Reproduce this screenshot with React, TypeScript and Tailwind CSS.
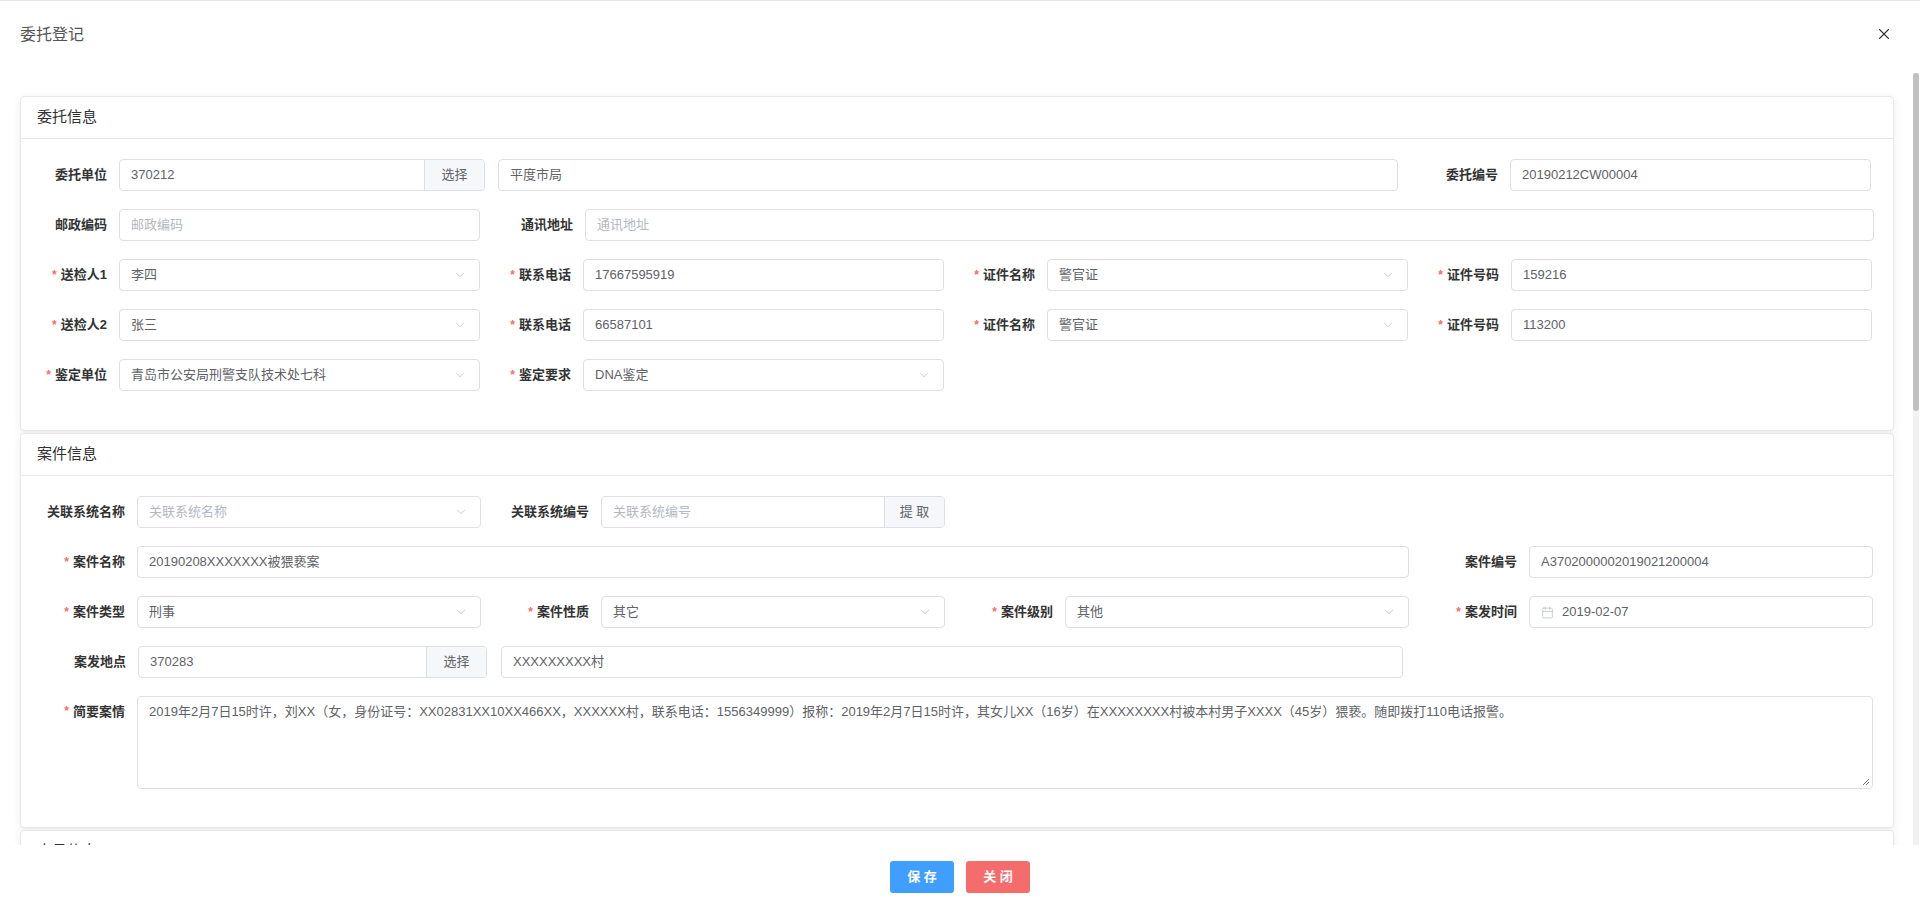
import React from "react";
import { X, ChevronDown, Calendar } from "lucide-react";

const F = { fontFamily: '"Liberation Sans", "Noto Sans CJK SC", sans-serif' };

function Label({ text, req, w }: { text: string; req?: boolean; w: string }) {
  return (
    <div className={`${w} shrink-0 flex items-center justify-end pr-3 text-[13px] font-bold text-[#333]`}>
      {req && <span className="text-[#f56c6c] mr-1 text-[12px]">*</span>}
      {text}
    </div>
  );
}

function Input({ v, ph, w, sel, btn, cal }: { v?: string; ph?: string; w: string; sel?: boolean; btn?: string; cal?: boolean }) {
  return (
    <div className={`${w} h-8 flex border border-[#dcdfe6] rounded-[4px] text-[13px] bg-white overflow-hidden`}>
      <div className="flex-1 flex items-center px-[11px] min-w-0">
        {cal && <Calendar size={13} className="text-[#c0c4cc] mr-2" strokeWidth={1.5} />}
        <span className={v ? "text-[#606266]" : "text-[#b4b8c0]"}>{v || ph}</span>
      </div>
      {sel && (
        <div className="flex items-center pr-3">
          <ChevronDown size={14} className="text-[#c0c4cc]" strokeWidth={1.5} />
        </div>
      )}
      {btn && (
        <div className="w-[60px] shrink-0 flex items-center justify-center bg-[#f5f7fa] border-l border-[#dcdfe6] text-[#606266]">
          {btn}
        </div>
      )}
    </div>
  );
}

function Field({ label, req, lw, iw, ...rest }: any) {
  return (
    <div className="flex w-[464px] h-8">
      <Label text={label} req={req} w={lw} />
      <Input w={iw} {...rest} />
    </div>
  );
}

function Card({ title, children, pb }: { title: string; children: React.ReactNode; pb: string }) {
  return (
    <div className="border border-[#e6e8ec] rounded-[4px] bg-white shadow-[0_2px_8px_rgba(0,0,0,0.08)] mb-[2px]">
      <div className="h-[42px] flex items-center px-4 border-b border-[#e6e8ec] text-[15px] text-[#303133]">{title}</div>
      <div className={`pt-[20px] ${pb} flex flex-col gap-[18px]`}>{children}</div>
    </div>
  );
}

export default function App() {
  const A = { lw: "w-[98px]", iw: "w-[361px]" };
  const B = { lw: "w-[116px]", iw: "w-[344px]" };
  return (
    <div style={F} className="w-[1920px] h-[912px] bg-white flex flex-col border-t border-[#e4e4e4] overflow-hidden">
      <div className="h-[72px] shrink-0 flex items-start justify-between pl-5 pr-[27px] pt-[22px]">
        <span className="text-[16px] text-[#555]">委托登记</span>
        <X size={18} strokeWidth={1.5} className="text-[#333] mt-[2px]" />
      </div>
      <div className="h-[772px] flex overflow-hidden">
        <div className="flex-1 pl-5 pr-[19px] pt-[23px]">
          <Card title="委托信息" pb="pb-[39px]">
            <div className="flex h-8">
              <div className="flex w-[477px]">
                <Label text="委托单位" w="w-[98px]" />
                <Input w="w-[366px]" v="370212" btn="选择" />
              </div>
              <Input w="w-[900px]" v="平度市局" />
              <div className="ml-[14px]"><Field label="委托编号" {...A} v="20190212CW00004" /></div>
            </div>
            <div className="flex h-8">
              <Field label="邮政编码" {...A} ph="邮政编码" />
              <div className="flex">
                <Label text="通讯地址" w="w-[100px]" />
                <Input w="w-[1289px]" ph="通讯地址" />
              </div>
            </div>
            <div className="flex">
              <Field label="送检人1" req {...A} v="李四" sel />
              <Field label="联系电话" req {...A} v="17667595919" />
              <Field label="证件名称" req {...A} v="警官证" sel />
              <Field label="证件号码" req {...A} v="159216" />
            </div>
            <div className="flex">
              <Field label="送检人2" req {...A} v="张三" sel />
              <Field label="联系电话" req {...A} v="66587101" />
              <Field label="证件名称" req {...A} v="警官证" sel />
              <Field label="证件号码" req {...A} v="113200" />
            </div>
            <div className="flex">
              <Field label="鉴定单位" req {...A} v="青岛市公安局刑警支队技术处七科" sel />
              <Field label="鉴定要求" req {...A} v="DNA鉴定" sel />
            </div>
          </Card>
          <Card title="案件信息" pb="pb-[38px]">
            <div className="flex">
              <Field label="关联系统名称" {...B} ph="关联系统名称" sel />
              <Field label="关联系统编号" {...B} ph="关联系统编号" btn="提 取" />
            </div>
            <div className="flex">
              <div className="flex w-[1392px]">
                <Label text="案件名称" req w="w-[116px]" />
                <Input w="w-[1272px]" v="20190208XXXXXXX被猥亵案" />
              </div>
              <Field label="案件编号" {...B} v="A3702000002019021200004" />
            </div>
            <div className="flex">
              <Field label="案件类型" req {...B} v="刑事" sel />
              <Field label="案件性质" req {...B} v="其它" sel />
              <Field label="案件级别" req {...B} v="其他" sel />
              <Field label="案发时间" req {...B} v="2019-02-07" cal />
            </div>
            <div className="flex h-8">
              <div className="flex w-[480px]">
                <Label text="案发地点" w="w-[117px]" />
                <Input w="w-[349px]" v="370283" btn="选择" />
              </div>
              <Input w="w-[902px]" v="XXXXXXXXX村" />
            </div>
            <div className="flex">
              <Label text="简要案情" req w="w-[116px] !items-start pt-[6px]" />
              <div className="w-[1736px] h-[93px] border border-[#dcdfe6] rounded-[4px] px-[11px] py-[5px] text-[13px] text-[#606266] relative">
                2019年2月7日15时许，刘XX（女，身份证号：XX02831XX10XX466XX，XXXXXX村，联系电话：1556349999）报称：2019年2月7日15时许，其女儿XX（16岁）在XXXXXXXX村被本村男子XXXX（45岁）猥亵。随即拨打110电话报警。
                <svg className="absolute right-[2px] bottom-[2px]" width="8" height="8" viewBox="0 0 8 8"><path d="M7 1L1 7M7 4L4 7" stroke="#777" strokeWidth="1" /></svg>
              </div>
            </div>
          </Card>
          <div className="border border-[#e6e8ec] rounded-[4px] bg-white shadow-[0_2px_8px_rgba(0,0,0,0.08)]">
            <div className="h-[41px] flex items-center px-4 text-[15px] text-[#303133]">人员信息</div>
          </div>
        </div>
        <div className="w-[6px] mr-[1px] bg-[#f1f1f1] flex flex-col">
          <div className="h-[338px] bg-[#c1c1c1] rounded-[3px]" />
        </div>
      </div>
      <div className="flex-1 flex justify-center items-start pt-[16px] gap-3 bg-white relative z-10">
        <button className="w-[64px] h-8 rounded-[3px] bg-[#409eff] text-white text-[13px] font-bold">保 存</button>
        <button className="w-[64px] h-8 rounded-[3px] bg-[#f56c6c] text-white text-[13px] font-bold">关 闭</button>
      </div>
    </div>
  );
}
